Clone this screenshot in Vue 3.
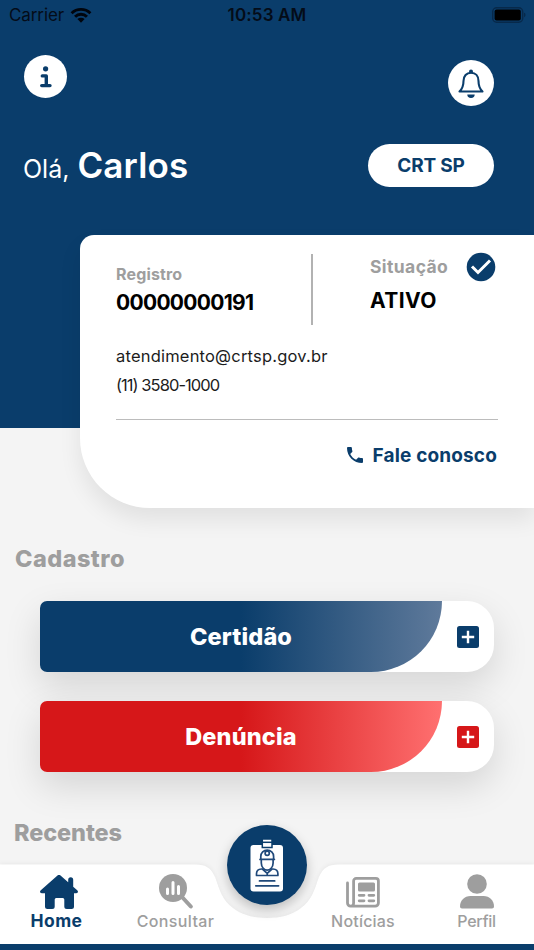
<template>
    <div class="screen">
        <div class="status-bar">
            <div class="carrier">
                <span class="carrier-name">Carrier</span>
                <svg class="wifi" viewBox="0 0 22 16">
                    <path d="M0.6 5.2a15 15 0 0 1 20.8 0l-2 2.1a12 12 0 0 0-16.8 0z" />
                    <path d="M4 8.7a10 10 0 0 1 14 0l-2.1 2.1a7 7 0 0 0-9.8 0z" />
                    <path d="M7.4 12.1a5.2 5.2 0 0 1 7.2 0L11 15.7z" />
                </svg>
            </div>
            <span class="clock">10:53 AM</span>
            <svg class="battery" viewBox="0 0 34 16">
                <rect class="battery-case" x="0.7" y="0.7" width="30" height="14.6" rx="4" />
                <rect x="2.6" y="2.6" width="26.2" height="10.8" rx="2" />
                <path class="battery-tip" d="M32 5.8v4.4c2-.6 2-3.8 0-4.4z" />
            </svg>
        </div>

        <div class="actions">
            <button class="round info">
                <svg viewBox="0 0 43 43">
                    <circle cx="21.6" cy="13.8" r="2.6" />
                    <path d="M18.3 20.9H22.3V30.600M17.700 30.600H26" />
                </svg>
            </button>
            <button class="round bell">
                <svg viewBox="0 0 46 46">
                    <path class="line" d="M11.500 31.500c3-2.800 4-6 4-10.500 0-5 3-8.300 7.500-8.300s7.500 3.300 7.500 8.300c0 4.500 1 7.700 4 10.500z" />
                    <circle cx="23" cy="11.500" r="2" />
                    <path d="M19.300 34.500h7.400a3.700 3.400 0 0 1-7.400 0z" />
                </svg>
            </button>
        </div>

        <div class="greeting">
            <div class="hello"><span class="ola">Olá,</span><span class="name">Carlos</span></div>
            <button class="council"><span>CRT SP</span></button>
        </div>

        <div class="card">
            <div class="card-top">
                <div class="registro">
                    <div class="label label-registro">Registro</div>
                    <div class="value value-number">00000000191</div>
                </div>
                <div class="situacao">
                    <div class="situacao-row">
                        <div class="label label-situacao">Situação</div>
                        <svg class="check" viewBox="0 0 30 30">
                            <circle cx="15" cy="15" r="14.300" />
                            <path d="M6 14.500l6 6L24 8.500" />
                        </svg>
                    </div>
                    <div class="value value-ativo">ATIVO</div>
                </div>
            </div>
            <div class="contact">
                <div class="email">atendimento@crtsp.gov.br</div>
                <div class="phone">(11) 3580-1000</div>
            </div>
            <div class="talk">
                <svg viewBox="3 3 18 18">
                    <path d="M6.620 10.790c1.440 2.830 3.760 5.140 6.590 6.590l2.200-2.200c.27-.27.67-.36 1.020-.24 1.120.37 2.330.57 3.570.57.55 0 1 .45 1 1V20c0 .55-.45 1-1 1C10.610 21 3 13.390 3 4c0-.55.45-1 1-1h3.500c.55 0 1 .45 1 1 0 1.250.2 2.450.57 3.570.11.35.03.74-.25 1.020z" />
                </svg>
                <span>Fale conosco</span>
            </div>
        </div>

        <h2 class="section cadastro">Cadastro</h2>
        <div class="services">
            <div v-for="item in services" :key="item.name" class="service" :class="item.color">
                <div class="service-label"><span>{{ item.name }}</span></div>
                <svg class="plus" viewBox="0 0 22 22">
                    <rect width="22" height="22" rx="2.500" />
                    <path d="M11 4.800v12.400M4.800 11h12.400" />
                </svg>
            </div>
        </div>
        <h2 class="section recentes">Recentes</h2>

        <div class="tab-bar">
            <svg class="tab-shape" viewBox="0 0 534 80">
                <path d="M0 .5H195C206 .5 211 4 215 13C220 27 222 36 233 44C242 51 253 54 267 54S292 51 301 44C312 36 314 27 319 13C323 4 328 .5 339 .5H534V80H0z" />
            </svg>
            <div class="tab active">
                <svg class="icon-home" viewBox="0 0 38 34">
                    <path d="M17.200.7a2.700 2.700 0 0 1 3.600 0l7.400 6.500V4.800a2.500 2.500 0 0 1 5 0v6.900l4 3.600c1.400 1.300.8 2.900-1 2.900H34v13.300a2.500 2.500 0 0 1-2.500 2.500h-4.700a2.500 2.500 0 0 1-2.500-2.500v-7a1.500 1.500 0 0 0-1.500-1.500h-6.600a1.500 1.500 0 0 0-1.500 1.500v7a2.500 2.500 0 0 1-2.500 2.500H7.500A2.500 2.500 0 0 1 5 31.500V18.200H1.800c-1.800 0-2.400-1.600-1-2.900z" />
                </svg>
                <span class="tab-home">Home</span>
            </div>
            <div class="tab">
                <svg class="icon-search" viewBox="0 0 34 35">
                    <circle cx="14" cy="14" r="14" />
                    <path class="handle" d="M23.500 23.500l8.300 9" />
                    <path class="bars" d="M8.500 15v4.500M14 8.500v11M19.500 12.500v7" />
                </svg>
                <span class="tab-consultar">Consultar</span>
            </div>
            <div class="tab tab-noticias">
                <svg class="icon-news" viewBox="0 0 34 31">
                    <path class="paper" d="M7.600 4a2.600 2.600 0 0 1 2.600-2.600h19.600A2.600 2.600 0 0 1 32.400 4v22a3.200 3.200 0 0 1-3.200 3.200H4.600A3.200 3.200 0 0 1 1.500 26V6M7.600 4v22a3 3 0 0 1-3 3.200" />
                    <rect x="12" y="5.500" width="17" height="9" rx="1.500" />
                    <path class="rows" d="M13.200 18.300h4.800M23 18.300h4.800M13.200 23.800h4.800M23 23.800h4.800" />
                </svg>
                <span>Notícias</span>
            </div>
            <div class="tab tab-perfil">
                <svg class="icon-user" viewBox="0 0 34 35">
                    <circle cx="17" cy="10" r="9.800" />
                    <path d="M0 32.500C0 26.500 4.500 22 10.500 22h13C29.500 22 34 26.500 34 32.500c0 1.200-.8 2-2 2H2c-1.200 0-2-.8-2-2z" />
                </svg>
                <span>Perfil</span>
            </div>

            <button class="badge">
                <svg viewBox="0 0 80 80">
                    <rect class="white" x="23.500" y="20" width="32.500" height="46.500" rx="3" />
                    <path class="clip" d="M35.300 14h9.700v8.500h-9.700z" />
                    <path class="clip-line" d="M35.300 17.300h9.700" />
                    <path class="stroke" d="M34.300 34.500v3.500c0 4.500 3.200 7.200 5.900 7.200s5.900-2.700 5.900-7.200v-3.500" />
                    <path class="stroke" d="M33.800 33.300v-1.800a6.400 6.400 0 0 1 12.800 0v1.800M33 34.400h14.400" />
                    <circle class="stroke" cx="40.200" cy="28.300" r="2.100" />
                    <path class="stroke" d="M29.500 50.500v-1.800c0-2.900 2-4.500 5-4.700h.9l4.800 4.300 4.800-4.300h.9c3 .2 5 1.800 5 4.700v1.800zM40.200 48.300v2.200" />
                    <path class="stroke" d="M32.500 55.900h15.200M28.800 60.800h22.800" />
                </svg>
            </button>
        </div>
    </div>
</template>

<script setup>
import { ref } from 'vue';

const services = ref([
    { name: 'Certidão', color: 'blue' },
    { name: 'Denúncia', color: 'red' }
])
</script>

<style>
body {
    margin: 0;
    background: #f4f4f4;
}
</style>

<style scoped>
* {
    box-sizing: border-box;
}

.screen {
    width: 534px;
    height: 950px;
    display: flex;
    flex-direction: column;
    overflow: hidden;
    background: linear-gradient(#0a3d6b 427.5px, #f4f4f4 427.5px);
    font-family: Inter, sans-serif;
    white-space: nowrap;
}

svg {
    display: block;
    flex: none;
}

button {
    border: none;
    padding: 0;
    font-family: inherit;
    background: white;
    color: #0a3d6b;
}

.status-bar {
    height: 30px;
    padding: 0 9px;
    display: grid;
    grid-template-columns: 1fr auto 1fr;
    align-items: center;
    color: #040c18;
    font-size: 17px;
}

.carrier {
    display: flex;
    align-items: center;
    gap: 7px;
}

.carrier-name {
    letter-spacing: -0.1px;
}

.wifi {
    width: 22px;
    height: 16px;
    margin-left: -1px;
    fill: #00050d;
}

.clock {
    font-weight: 600;
    letter-spacing: 0.15px;
}

.battery {
    width: 34px;
    height: 16px;
    justify-self: end;
    margin-right: -1px;
}

.battery-case {
    fill: none;
    stroke: #07294a;
    stroke-width: 1.4;
}

.battery-tip {
    fill: #07294a;
}

.actions {
    height: 114px;
    padding: 25px 40px 0 24px;
    display: flex;
    justify-content: space-between;
}

.round {
    border-radius: 50%;
}

.info {
    width: 43px;
    height: 43px;
}

.info svg {
    fill: #0a3d6b;
}

.info path {
    fill: none;
    stroke: #0a3d6b;
    stroke-width: 3.4;
    stroke-linecap: round;
    stroke-linejoin: round;
}

.bell {
    width: 46px;
    height: 46px;
    margin-top: 4.5px;
}

.bell svg {
    fill: #0a3d6b;
}

.bell .line {
    fill: none;
    stroke: #0a3d6b;
    stroke-width: 2.1;
    stroke-linejoin: round;
}

.greeting {
    height: 91px;
    padding: 0 40px 0 23px;
    display: flex;
    justify-content: space-between;
}

.hello {
    color: white;
    line-height: 42px;
}

.ola {
    font-size: 25px;
    margin-right: 8px;
}

.name {
    font-size: 35px;
    font-weight: 600;
    letter-spacing: 0.15px;
}

.council {
    width: 126px;
    height: 43px;
    border-radius: 22px;
    font-size: 19px;
    font-weight: 700;
    letter-spacing: -0.2px;
}

.card {
    height: 273px;
    flex: none;
    margin-left: 80px;
    padding: 19px 36px 0;
    background: white;
    border-radius: 14px 0 0 70px;
    box-shadow: 0 12px 22px rgba(0, 0, 0, 0.08);
}

.card-top {
    display: flex;
    height: 71px;
}

.registro {
    width: 197px;
    border-right: 2px solid #b2b2b2;
    padding-top: 8px;
}

.label {
    color: #9e9e9e;
    font-weight: 700;
    line-height: 24px;
}

.label-registro {
    font-size: 16px;
    letter-spacing: 0.15px;
}

.label-situacao {
    width: 79px;
    font-size: 17.5px;
    letter-spacing: 0.4px;
}

.value {
    color: black;
    font-weight: 700;
    font-size: 21px;
    line-height: 30px;
}

.value-number {
    margin-top: 2px;
    letter-spacing: -0.7px;
}

.value-ativo {
    margin-top: 4px;
    letter-spacing: 0.4px;
}

.situacao {
    padding-left: 57px;
    margin-top: -2.5px;
}

.situacao-row {
    display: flex;
    align-items: center;
    gap: 17px;
}

.check {
    width: 30px;
    height: 30px;
    fill: #0a3d6b;
}

.check path {
    fill: none;
    stroke: white;
    stroke-width: 3;
}

.contact {
    height: 95px;
    padding-top: 17px;
    border-bottom: 1px solid #bcbcbc;
    color: #1c1c1c;
    font-size: 16.5px;
    line-height: 29px;
}

.email {
    letter-spacing: 0.2px;
}

.phone {
    letter-spacing: -0.95px;
}

.talk {
    height: 70px;
    display: flex;
    align-items: center;
    justify-content: flex-end;
    gap: 10px;
    padding-right: 1px;
    color: #0a3d6b;
    font-size: 19px;
    font-weight: 700;
    letter-spacing: 0.15px;
}

.talk svg {
    width: 16px;
    height: 16px;
    fill: #0a3d6b;
}

.section {
    margin: 0;
    color: #9e9e9e;
    font-size: 23.5px;
    font-weight: 800;
    line-height: 34px;
}

.cadastro {
    padding: 34px 0 25px 15px;
    letter-spacing: 0.45px;
}

.recentes {
    padding: 43.5px 0 0 14px;
    letter-spacing: -0.1px;
}

.services {
    display: flex;
    flex-direction: column;
    gap: 29px;
    padding: 0 40px;
}

.service {
    height: 71px;
    display: flex;
    align-items: center;
    background: white;
    border-radius: 7px 27px 27px 7px;
    box-shadow: 0 14px 36px rgba(0, 0, 0, 0.13);
}

.service-label {
    width: 402px;
    height: 71px;
    display: flex;
    align-items: center;
    justify-content: center;
    border-radius: 7px 0 71px 7px;
    color: white;
    font-size: 23.5px;
    font-weight: 800;
    letter-spacing: 0.15px;
}

.blue .service-label {
    background: linear-gradient(90deg, #0a3d6b 50%, #5f7a9b);
}

.red .service-label {
    background: linear-gradient(90deg, #d61719 50%, #ff7070);
}

.plus {
    width: 22px;
    height: 22px;
    margin-left: 15px;
}

.plus path {
    stroke: white;
    stroke-width: 2.4;
}

.blue .plus {
    fill: #0a3d6b;
}

.red .plus {
    fill: #d61719;
}

.tab-bar {
    position: relative;
    height: 86px;
    flex: none;
    margin-top: auto;
    padding: 0 0 6px;
    display: grid;
    grid-template-columns: 113px 125px 68px 114px 113px;
    background: linear-gradient(transparent 80px, #0a3d6b 80px);
}

.tab-shape {
    position: absolute;
    top: 0;
    left: 0;
    width: 534px;
    height: 80px;
    fill: white;
    filter: drop-shadow(0 -1px 2px rgba(0, 0, 0, 0.05));
    clip-path: inset(-10px 0 0 0);
}

.tab {
    position: relative;
    display: flex;
    flex-direction: column;
    align-items: center;
    justify-content: flex-end;
    padding-bottom: 13px;
    color: #9e9e9e;
    fill: #9e9e9e;
    font-size: 16px;
    font-weight: 500;
    line-height: 20px;
}

.tab svg {
    margin-bottom: 2px;
}

.active {
    color: #0a3d6b;
    fill: #0a3d6b;
    font-weight: 700;
}

.tab-home {
    font-size: 17.5px;
    letter-spacing: 0.4px;
}

.tab-consultar {
    letter-spacing: 0.35px;
}

.tab-noticias {
    grid-column: 4;
    letter-spacing: 0.2px;
}

.tab-perfil {
    grid-column: 5;
    letter-spacing: -0.3px;
}

.icon-home {
    width: 38px;
    height: 34px;
    margin-left: 5px;
}

.icon-search {
    width: 34px;
    height: 35px;
}

.icon-news {
    width: 34px;
    height: 31px;
}

.tab .icon-news {
    margin-bottom: 3px;
}

.icon-user {
    width: 34px;
    height: 35px;
}

.handle {
    stroke: #9e9e9e;
    stroke-width: 4;
    stroke-linecap: round;
}

.bars {
    stroke: white;
    stroke-width: 3;
    stroke-linecap: round;
}

.paper {
    fill: none;
    stroke: #9e9e9e;
    stroke-width: 2.8;
    stroke-linecap: round;
}

.rows {
    stroke: #9e9e9e;
    stroke-width: 2.8;
    stroke-linecap: round;
}

.badge {
    position: absolute;
    top: -39.5px;
    left: 227px;
    width: 80px;
    height: 80px;
    border-radius: 50%;
    background: #0a3d6b;
    box-shadow: 0 5px 12px rgba(0, 0, 0, 0.22);
}

.white {
    fill: white;
}

.clip {
    fill: white;
    stroke: #0a3d6b;
    stroke-width: 1.5;
}

.clip-line {
    stroke: #0a3d6b;
    stroke-width: 1.5;
}

.stroke {
    fill: none;
    stroke: #20497a;
    stroke-width: 1.7;
    stroke-linecap: round;
    stroke-linejoin: round;
}
</style>
